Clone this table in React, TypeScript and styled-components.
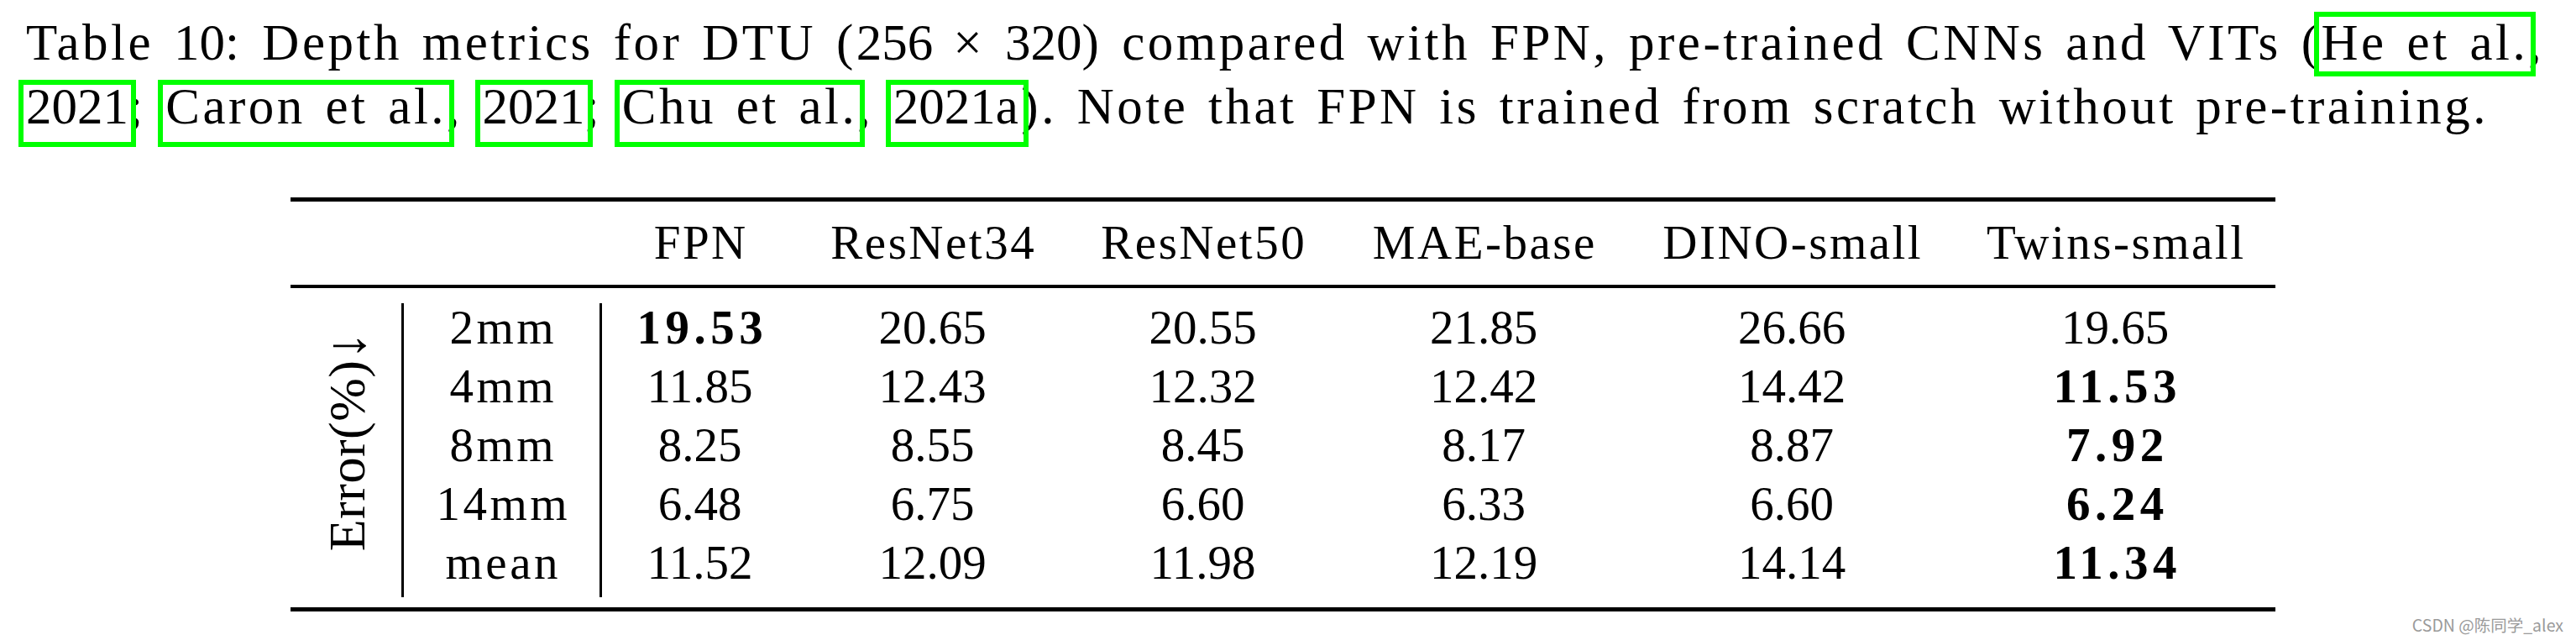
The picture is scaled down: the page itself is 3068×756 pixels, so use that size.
import React from 'react';
import styled, { createGlobalStyle } from 'styled-components';

const GlobalStyle = createGlobalStyle`
  html, body { margin: 0; padding: 0; background: #fff; }
  body { width: 3068px; height: 756px; overflow: hidden; }
`;

const COLS = '135px 236px 233px 321px 323px 346px 388px 382px';

const Page = styled.div`
  position: relative;
  width: 3068px;
  height: 756px;
  background: #fff;
  color: #000;
  font-family: "Liberation Serif", "Times New Roman", serif;
`;

const Caption = styled.div`
  padding: 13px 38px 0 31px;
  font-size: 61px;
  line-height: 76px;
`;

const CaptionLine = styled.div<{ $justify?: boolean }>`
  text-align: ${(p) => (p.$justify ? 'justify' : 'left')};
  text-align-last: ${(p) => (p.$justify ? 'justify' : 'left')};
  letter-spacing: 3.5px;
  word-spacing: ${(p) => (p.$justify ? '0px' : '5px')};
`;

const Digits = styled.span`
  letter-spacing: 0;
`;

const Cite = styled.span<{ $first?: boolean }>`
  position: relative;
  &::after {
    content: '';
    position: absolute;
    left: -9px;
    right: -9px;
    top: ${(p) => (p.$first ? '-3px' : '2px')};
    bottom: ${(p) => (p.$first ? '-7px' : '-15px')};
    border: 6px solid #00ff00;
    pointer-events: none;
  }
`;

const Table = styled.div`
  margin: 70px 0 0 346px;
  width: 2364px;
  font-size: 57px;
`;

const Rule = styled.div<{ $w: number }>`
  height: ${(p) => p.$w}px;
  background: #000;
`;

const HeadRow = styled.div`
  display: grid;
  grid-template-columns: ${COLS};
  height: 99px;
  box-sizing: border-box;
  padding-top: 17px;
  line-height: 64px;
`;

const HeadCell = styled.div`
  text-align: center;
  letter-spacing: 2.5px;
  padding-left: 2.5px;
`;

const Body = styled.div`
  display: grid;
  grid-template-columns: ${COLS};
  grid-auto-rows: 70px;
  padding: 18px 0 12px;
  line-height: 58px;
`;

const GroupCell = styled.div`
  grid-row: span 5;
  border-right: 3px solid #000;
  display: flex;
  align-items: center;
  justify-content: center;
  padding-bottom: 20px;
  box-sizing: border-box;
`;

const VLabel = styled.span`
  writing-mode: vertical-rl;
  text-orientation: sideways;
  transform: rotate(180deg);
  font-size: 62px;
  line-height: 1;
  letter-spacing: 0.5px;
`;

const Arrow = styled.span`
  font-size: 66px;
  margin-left: 2px;
`;

const LabelCell = styled.div`
  border-right: 3px solid #000;
  text-align: center;
  letter-spacing: 3.5px;
  padding-left: 3.5px;
`;

const NumCell = styled.div<{ $bold?: boolean }>`
  text-align: center;
  font-weight: ${(p) => (p.$bold ? 700 : 400)};
  letter-spacing: ${(p) => (p.$bold ? '5.5px' : '0px')};
  padding-left: ${(p) => (p.$bold ? '5.5px' : '0px')};
`;

const Watermark = styled.div`
  position: absolute;
  right: 15px;
  bottom: 3px;
  font-family: "Noto Sans CJK SC", "Noto Sans", sans-serif;
  font-size: 19.5px;
  line-height: 1;
  color: #9a9a9a;
  white-space: nowrap;
`;

type Val = { v: string; b?: boolean };
const headers = ['FPN', 'ResNet34', 'ResNet50', 'MAE-base', 'DINO-small', 'Twins-small'];
const rows: { label: string; vals: Val[] }[] = [
  { label: '2mm', vals: [{ v: '19.53', b: true }, { v: '20.65' }, { v: '20.55' }, { v: '21.85' }, { v: '26.66' }, { v: '19.65' }] },
  { label: '4mm', vals: [{ v: '11.85' }, { v: '12.43' }, { v: '12.32' }, { v: '12.42' }, { v: '14.42' }, { v: '11.53', b: true }] },
  { label: '8mm', vals: [{ v: '8.25' }, { v: '8.55' }, { v: '8.45' }, { v: '8.17' }, { v: '8.87' }, { v: '7.92', b: true }] },
  { label: '14mm', vals: [{ v: '6.48' }, { v: '6.75' }, { v: '6.60' }, { v: '6.33' }, { v: '6.60' }, { v: '6.24', b: true }] },
  { label: 'mean', vals: [{ v: '11.52' }, { v: '12.09' }, { v: '11.98' }, { v: '12.19' }, { v: '14.14' }, { v: '11.34', b: true }] },
];

export default function App() {
  return (
    <Page>
      <GlobalStyle />
      <Caption>
        <CaptionLine $justify>
          Table <Digits>10</Digits>: Depth metrics for DTU (<Digits>256</Digits> × <Digits>320</Digits>) compared
          with FPN, pre-trained CNNs and VITs (<Cite $first>He et al.</Cite>,
        </CaptionLine>
        <CaptionLine>
          <Cite>
            <Digits>2021</Digits>
          </Cite>
          ; <Cite>Caron et al.</Cite>,{' '}
          <Cite>
            <Digits>2021</Digits>
          </Cite>
          ; <Cite>Chu et al.</Cite>,{' '}
          <Cite>
            <Digits>2021</Digits>a
          </Cite>
          ). Note that FPN is trained from scratch without pre-training.
        </CaptionLine>
      </Caption>
      <Table>
        <Rule $w={5} />
        <HeadRow>
          <HeadCell />
          <HeadCell />
          {headers.map((h) => (
            <HeadCell key={h}>{h}</HeadCell>
          ))}
        </HeadRow>
        <Rule $w={4} />
        <Body>
          <GroupCell>
            <VLabel>
              Error(%)<Arrow>↓</Arrow>
            </VLabel>
          </GroupCell>
          {rows.map((r) => (
            <React.Fragment key={r.label}>
              <LabelCell>{r.label}</LabelCell>
              {r.vals.map((c, i) => (
                <NumCell key={i} $bold={c.b}>
                  {c.v}
                </NumCell>
              ))}
            </React.Fragment>
          ))}
        </Body>
        <Rule $w={5} />
      </Table>
      <Watermark>CSDN @陈同学_alex</Watermark>
    </Page>
  );
}
